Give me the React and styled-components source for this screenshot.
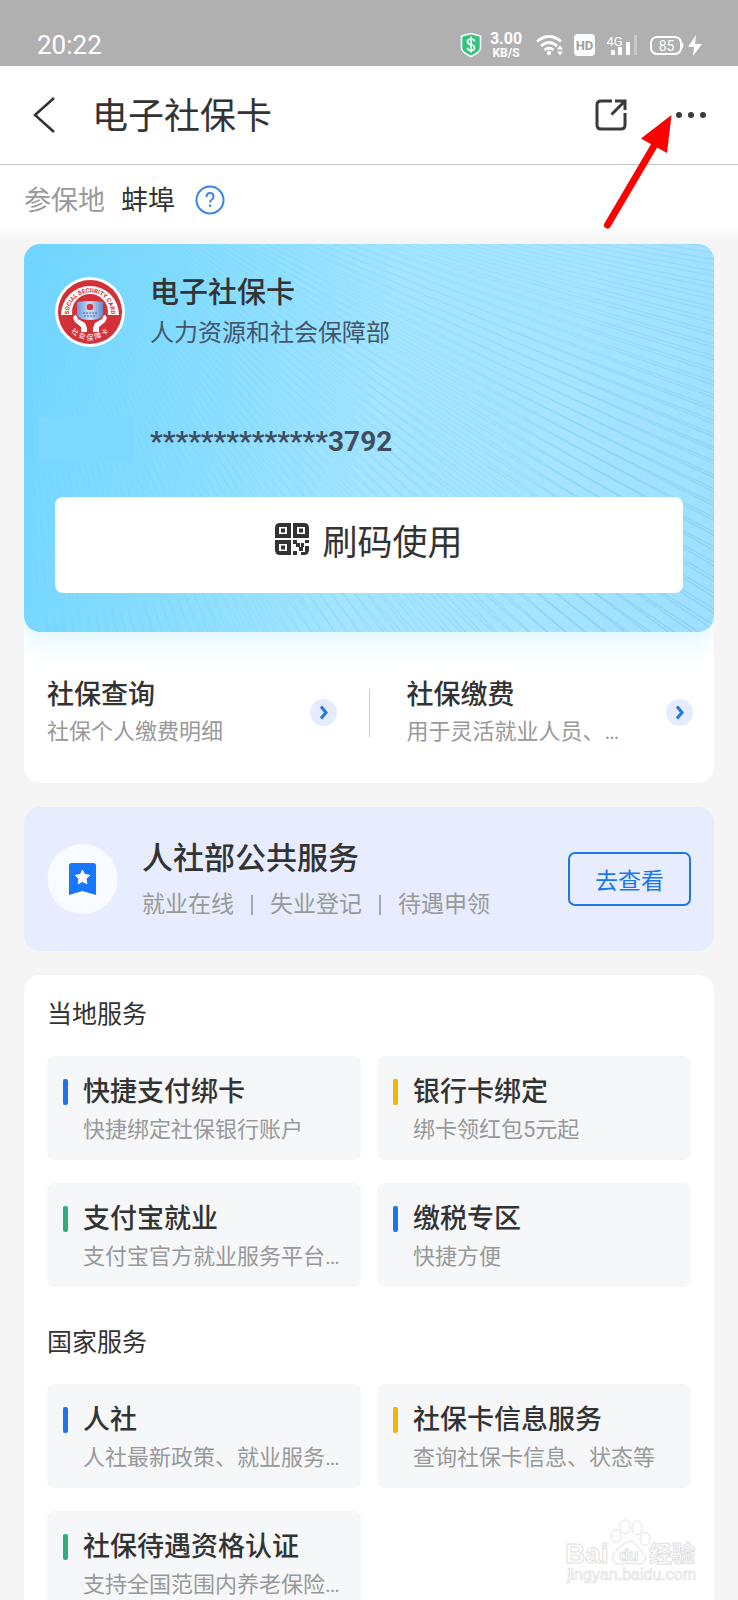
import React from "react";
import styled, { createGlobalStyle } from "styled-components";

const GlobalStyle = createGlobalStyle`
  * { box-sizing: border-box; }
  body {
    margin: 0;
    background: #f5f5f5;
    color: #333;
    font-family: Roboto, "Noto Sans CJK SC", sans-serif;
  }
  h1, h2, h3, p { margin: 0; font-weight: 400; }
  a { color: inherit; text-decoration: none; }
  button { font: inherit; color: inherit; border: 0; background: none; padding: 0; cursor: pointer; }
`;

const Screen = styled.div`
  position: relative;
  display: flex;
  flex-direction: column;
  height: 100vh;
  overflow: hidden;
`;

const StatusBar = styled.div`
  display: flex;
  align-items: center;
  flex: none;
  height: 66px;
  padding: 24px 36px 0 37px;
  background: #b0b0b0;
  color: #fff;
`;

const Clock = styled.time`
  flex: 1;
  font-size: 26px;
  line-height: 30px;
`;

const StatusIcons = styled.div`
  display: flex;
  align-items: center;
  gap: 8px;
`;

const NetSpeed = styled.div`
  display: flex;
  flex-direction: column;
  align-items: center;
  width: 32px;
  margin-right: 6px;
  font-weight: 700;
  font-size: 16px;
  line-height: 16px;
  small { font-size: 12px; line-height: 12px; }
`;

const Header = styled.header`
  display: flex;
  align-items: center;
  flex: none;
  height: 99px;
  padding: 0 31px 0 32px;
  background: #fff;
  border-bottom: 1px solid #c6c6c6;
`;

const IconButton = styled.button`
  display: flex;
  margin-left: ${(p) => p.$gap || 0}px;
`;

const PageTitle = styled.h1`
  flex: 1;
  margin-left: 35px;
  padding-top: 3px;
  font-size: 36px;
  line-height: 48px;
`;

const Content = styled.main`
  flex: 1;
  min-height: 0;
  overflow-y: auto;
  scrollbar-width: none;
`;

const Region = styled.div`
  display: flex;
  align-items: center;
  height: 79px;
  padding: 0 24px 9px;
  font-size: 27px;
  line-height: 40px;
  background: linear-gradient(#fff 60px, #f5f5f5 76px);
`;

const RegionText = styled.span`
  padding-top: 2px;
  margin-right: ${(p) => p.$gap}px;
  color: ${(p) => (p.$muted ? "#999" : "#333")};
`;

const Body = styled.div`
  display: flex;
  flex-direction: column;
  gap: 24px;
  padding: 0 24px;
`;

const Panel = styled.section`
  border-radius: 16px;
  background: #fff;
`;

const Card = styled.div`
  position: relative;
  overflow: hidden;
  padding: 28px 31px 39px;
  border-radius: 16px;
  background: linear-gradient(100deg, #70d5ff 0%, #84dcff 22%, #a4e4ff 50%, #a6e4ff 75%, #9ddfff 100%);
`;

const CardShadow = styled.div`
  border-radius: 16px;
  box-shadow: 0 12px 24px rgba(110, 220, 250, 0.2);
  clip-path: inset(0 0 -40px 0);
`;

const CardPattern = styled.svg`
  position: absolute;
  inset: 0;
  width: 100%;
  height: 100%;
`;

const CardHead = styled.div`
  position: relative;
  display: flex;
  align-items: center;
  gap: 25px;
`;

const CardTitle = styled.h2`
  font-size: 29px;
  font-weight: 500;
  line-height: 42px;
`;

const CardIssuer = styled.p`
  font-size: 24px;
  line-height: 38px;
  color: #44566a;
`;

const NumberRow = styled.div`
  position: relative;
  display: flex;
  align-items: center;
  gap: 16px;
  height: 44px;
  margin: 65px 0 36px -16px;
  font-size: 28px;
  font-weight: 700;
  line-height: 40px;
  color: #3f4d5e;
`;

const CardNumber = styled.span`
  padding-top: 6px;
`;

const NameMask = styled.span`
  width: 95px;
  height: 44px;
  background: #7cd8ff;
`;

const ScanButton = styled.button`
  position: relative;
  display: flex;
  align-items: center;
  justify-content: center;
  gap: 13px;
  width: 100%;
  height: 96px;
  padding-bottom: 12px;
  border-radius: 8px;
  background: #fff;
  font-size: 35px;
  line-height: 48px;
`;

const ScanLabel = styled.span`
  padding-top: 10px;
`;

const QuickLinks = styled.nav`
  display: grid;
  grid-template-columns: 1fr 1px 1fr;
  align-items: center;
  padding: 43px 0 33px;
`;

const QuickLink = styled.a`
  display: flex;
  align-items: center;
  justify-content: space-between;
  min-width: 0;
  padding: ${(p) => (p.$second ? "0 21px 0 37px" : "0 32px 0 23px")};
`;

const Divider = styled.span`
  height: 48px;
  background: #ccc;
`;

const LinkText = styled.div`
  padding-top: 1px;
`;

const ItemTitle = styled.h3`
  font-size: 27px;
  font-weight: 500;
  line-height: ${(p) => p.$line || 36}px;
  white-space: nowrap;
`;

const ItemNote = styled.p`
  overflow: hidden;
  font-size: 22px;
  line-height: ${(p) => p.$line || 40}px;
  color: #999;
  white-space: nowrap;
  text-overflow: ellipsis;
`;

const Banner = styled.section`
  display: flex;
  align-items: center;
  padding: 24px 23px;
  border-radius: 16px;
  background: #e7edff;
`;

const BannerText = styled.div`
  flex: 1;
  margin-left: 24px;
  padding-top: 4px;
`;

const BannerTitle = styled.h2`
  font-size: 31px;
  font-weight: 500;
  line-height: 48px;
`;

const BannerTopics = styled.p`
  display: flex;
  align-items: center;
  gap: 17px;
  font-size: 23px;
  line-height: 44px;
  color: #999;
  i { width: 2px; height: 20px; background: #a3a7b3; }
`;

const OutlineButton = styled.button`
  width: 123px;
  height: 54px;
  border: 2px solid #1c78e6;
  border-radius: 7px;
  color: #1c78e6;
  font-size: 23px;
`;

const ServicePanel = styled(Panel)`
  padding: 22px 23px 24px;
`;

const SectionTitle = styled.h2`
  margin: ${(p) => p.$top || 0}px 0 23px;
  font-size: 25px;
  line-height: 36px;
`;

const Grid = styled.div`
  display: grid;
  grid-template-columns: 1fr 1fr;
  gap: 23px 16px;
`;

const Tile = styled.a`
  display: grid;
  grid-template-columns: 5px minmax(0, 1fr);
  align-items: center;
  column-gap: 15px;
  padding: 18px 16px 10px;
  border-radius: 8px;
  background: #f5f7f9;
  ${ItemNote} { grid-column: 2; }
`;

const Accent = styled.span`
  height: 26px;
  border-radius: 2px;
  background: ${(p) => p.$color};
`;

const Pointer = styled.svg`
  position: absolute;
  top: 112px;
  right: 64px;
  pointer-events: none;
`;

const Watermark = styled.svg`
  position: absolute;
  right: 36px;
  bottom: 14px;
  pointer-events: none;
`;

const BLUE = "#1f76ea";
const YELLOW = "#f2b50f";
const GREEN = "#2fae80";

const localServices = [
  { title: "快捷支付绑卡", note: "快捷绑定社保银行账户", color: BLUE },
  { title: "银行卡绑定", note: "绑卡领红包5元起", color: YELLOW },
  { title: "支付宝就业", note: "支付宝官方就业服务平台…", color: GREEN },
  { title: "缴税专区", note: "快捷方便", color: BLUE },
];

const nationalServices = [
  { title: "人社", note: "人社最新政策、就业服务…", color: BLUE },
  { title: "社保卡信息服务", note: "查询社保卡信息、状态等", color: YELLOW },
  { title: "社保待遇资格认证", note: "支持全国范围内养老保险…", color: GREEN },
];

function StatusGlyphs() {
  return (
    <svg width="166" height="24" viewBox="536 33 166 24" fill="#fff">
      <g fill="none" stroke="#fff" strokeWidth="2.8">
        <path d="M537 41.5Q549 31.5 561 41.5" />
        <path d="M541 46Q549 39 557 46" />
        <path d="M544.5 50Q549 46.5 553.5 50" />
      </g>
      <circle cx="549" cy="53" r="2.2" />
      <path d="M557 49.5l3-4 3 4zM557 51.5l3 4 3-4z" />
      <rect x="574" y="34" width="21" height="22" rx="4" />
      <text x="584.5" y="50" fontSize="13" fontWeight="700" textAnchor="middle" fill="#a0a0a0">HD</text>
      <text x="606.5" y="46" fontSize="13">4G</text>
      <rect x="611" y="50" width="4" height="5" />
      <rect x="618" y="47" width="4" height="8" />
      <rect x="626" y="42" width="4" height="13" />
      <rect x="634" y="35" width="3" height="20" opacity=".3" />
      <rect x="651" y="37" width="30" height="17" rx="6" fill="none" stroke="#fff" strokeWidth="2" />
      <path d="M682 42q3 3.500 0 7z" />
      <text x="666.5" y="50.5" fontSize="14" textAnchor="middle">85</text>
      <path d="M696 35l-8 12h6l-1 9 9-12h-7z" />
    </svg>
  );
}

function Shield() {
  return (
    <svg width="22" height="26" viewBox="0 0 22 26">
      <path d="M11 1.5L20.500 4v12q0 4-9.500 8.500Q1.500 20 1.500 16V4z" fill="#35c47c" stroke="#fff" strokeWidth="1.5" />
      <path d="M14.5 9.500q0-2.500-3.500-2.500t-3.500 2.800q0 2.200 3.500 2.900t3.500 3q0 2.800-3.500 2.800t-3.500-2.700M11 4.500v16" fill="none" stroke="#fff" strokeWidth="1.6" />
    </svg>
  );
}

function Emblem() {
  return (
    <svg width="70" height="70" viewBox="-35 -35 70 70" role="img" aria-label="社会保障卡">
      <defs>
        <path id="emblem-top" d="M-20.5 6A21 21 0 1 1 20.5 6" />
        <path id="emblem-bottom" d="M-26 9A27.500 27.500 0 0 0 26 9" />
        <linearGradient id="emblem-card" x2="1">
          <stop stopColor="#6e97d4" />
          <stop offset=".5" stopColor="#cfe2fa" />
          <stop offset="1" stopColor="#6487c8" />
        </linearGradient>
      </defs>
      <circle r="35" fill="#fff" />
      <circle r="32" fill="#d2313a" />
      <path d="M-29 3A29 29 0 1 1 29 3H17A17 17 0 1 0 -17 3z" fill="#fff" />
      <circle r="18" fill="#d2313a" />
      <path d="M-14 3q-5 1-1 7l6 5v5h6v-4l-2-5-7-4zM14 3q5 1 1 7l-6 5v5H3v-4l2-5 7-4z" fill="#fff" />
      <path d="M-13-10q13-2 26 0V3q-2 5-13 5T-13 3z" fill="url(#emblem-card)" />
      <circle cy="-5" r="3.2" fill="#e03338" />
      <path d="M-7 1H7M-6 4H6" stroke="#4465b0" strokeWidth="1" strokeDasharray="2 1" />
      <text fontSize="6" fontWeight="700" fill="#c62e38">
        <textPath href="#emblem-top" startOffset="50%" textAnchor="middle">SOCIAL SECURITY CARD</textPath>
      </text>
      <text fontSize="7" fill="#fff">
        <textPath href="#emblem-bottom" startOffset="50%" textAnchor="middle">社 会 保 障 卡</textPath>
      </text>
    </svg>
  );
}

// Two overlapping fans of hairlines give the card its woven sheen.
function fan(cx, cy, count, offset) {
  return Array.from({ length: count }, (_, i) => {
    const a = ((i + offset) / count) * (Math.PI / 2) * 1.15 - 0.05;
    const x = cx + Math.cos(a) * 1100;
    const y = cy + Math.sin(a) * 1100;
    const mx = cx + Math.cos(a + 0.08) * 550;
    const my = cy + Math.sin(a + 0.08) * 550;
    return `M${cx} ${cy}Q${mx.toFixed(1)} ${my.toFixed(1)} ${x.toFixed(1)} ${y.toFixed(1)}`;
  }).join("");
}

function Pattern() {
  return (
    <CardPattern viewBox="0 0 690 388" preserveAspectRatio="none" aria-hidden="true">
      <defs>
        <linearGradient id="sheen" gradientUnits="userSpaceOnUse" x1="0" y1="0" x2="690" y2="388">
          <stop stopColor="#5bc8f5" stopOpacity=".04" />
          <stop offset=".5" stopColor="#6fd0fa" stopOpacity=".22" />
          <stop offset="1" stopColor="#70b8e8" stopOpacity=".4" />
        </linearGradient>
      </defs>
      <g fill="none" stroke="url(#sheen)" strokeWidth="1.3">
        <path d={fan(-60, -160, 120, 0)} />
        <path d={fan(10, -130, 110, 0.5)} />
      </g>
    </CardPattern>
  );
}

function QrIcon() {
  return (
    <svg width="34" height="32" viewBox="0 0 34 32" fill="#333">
      <path fillRule="evenodd" d="M5 0H16V15H0V5Q0 0 5 0zM4 4V11H12V4zM18 0H29Q34 0 34 5V15H18zM22 4V11H30V4zM0 17H16V32H5Q0 32 0 27zM4 21V28H12V21z" />
      <path d="M6 5.500H10V9.500H6zM24 5.500H28V9.500H24zM6 22.500H10V26.500H6zM18 17h4v3h3v4h3v4h-4v-4h-3v-3h-3zM30 17h4v3h-4zM26 20h3v4h-3zM30 23h4v4q0 5-5 5h-3v-3h4zM18 28h4v4h-4z" />
    </svg>
  );
}

function ArrowDot() {
  return (
    <svg width="27" height="27" viewBox="0 0 27 27">
      <circle cx="13.5" cy="13.5" r="13.5" fill="#e4ecfd" />
      <path d="M11 7.500l5 6-5 6" fill="none" stroke="#2277ec" strokeWidth="3" />
    </svg>
  );
}

function BookmarkBadge() {
  return (
    <svg width="71" height="70" viewBox="0 0 71 70">
      <circle cx="35.5" cy="35" r="35" fill="#f8fbff" />
      <path d="M24.5 19h22q2.500 0 2.500 2.500V51l-13.500-4L22 51V21.500q0-2.500 2.500-2.500z" fill="#1777ff" />
      <path d="M35.5 26l2.200 4.600 5 .7-3.700 3.500.9 5-4.400-2.400-4.400 2.400.9-5-3.700-3.500 5-.7z" fill="#fff" stroke="#fff" strokeLinejoin="round" />
    </svg>
  );
}

function Services({ items }) {
  return (
    <Grid>
      {items.map((item) => (
        <Tile href="#" key={item.title}>
          <Accent $color={item.color} />
          <ItemTitle>{item.title}</ItemTitle>
          <ItemNote>{item.note}</ItemNote>
        </Tile>
      ))}
    </Grid>
  );
}

export default function App() {
  return (
    <Screen>
      <GlobalStyle />
      <StatusBar>
        <Clock>20:22</Clock>
        <StatusIcons>
          <Shield />
          <NetSpeed>
            <span>3.00</span>
            <small>KB/S</small>
          </NetSpeed>
          <StatusGlyphs />
        </StatusIcons>
      </StatusBar>

      <Header>
        <IconButton aria-label="返回">
          <svg width="25" height="36" viewBox="0 0 25 36" fill="none" stroke="#333" strokeWidth="2.5">
            <path d="M22 1L3 18l19 17" />
          </svg>
        </IconButton>
        <PageTitle>电子社保卡</PageTitle>
        <IconButton aria-label="分享">
          <svg width="32" height="32" viewBox="0 0 32 32" fill="none" stroke="#3a3a3a" strokeWidth="3">
            <path d="M17 2H6Q2 2 2 6V26Q2 30 6 30H26Q30 30 30 26V14M20 2H30V11M30 2L16.500 15.500" />
          </svg>
        </IconButton>
        <IconButton aria-label="更多" $gap={48}>
          <svg width="32" height="10" viewBox="0 0 32 10" fill="#3a3a3a">
            <circle cx="4" cy="5" r="3" />
            <circle cx="16" cy="5" r="3" />
            <circle cx="28" cy="5" r="3" />
          </svg>
        </IconButton>
      </Header>

      <Content>
        <Region>
          <RegionText $muted $gap={16}>参保地</RegionText>
          <RegionText $gap={20}>蚌埠</RegionText>
          <IconButton aria-label="帮助">
            <svg width="30" height="30" viewBox="0 0 30 30" fill="none" stroke="#3c86e8" strokeWidth="2">
              <circle cx="15" cy="15" r="13.5" />
              <path d="M11.500 12q0-4 3.500-4t3.500 3.500q0 2-1.700 3t-1.800 3M15 19.500v2.500" />
            </svg>
          </IconButton>
        </Region>

        <Body>
          <Panel>
            <CardShadow>
              <Card>
                <Pattern />
                <CardHead>
                  <Emblem />
                  <div>
                    <CardTitle>电子社保卡</CardTitle>
                    <CardIssuer>人力资源和社会保障部</CardIssuer>
                  </div>
                </CardHead>
                <NumberRow>
                  <NameMask />
                  <CardNumber>**************3792</CardNumber>
                </NumberRow>
                <ScanButton>
                  <QrIcon />
                  <ScanLabel>刷码使用</ScanLabel>
                </ScanButton>
              </Card>
            </CardShadow>
            <QuickLinks>
              <QuickLink href="#">
                <LinkText>
                  <ItemTitle $line={38}>社保查询</ItemTitle>
                  <ItemNote $line={36}>社保个人缴费明细</ItemNote>
                </LinkText>
                <ArrowDot />
              </QuickLink>
              <Divider />
              <QuickLink href="#" $second>
                <LinkText>
                  <ItemTitle $line={38}>社保缴费</ItemTitle>
                  <ItemNote $line={36}>用于灵活就业人员、…</ItemNote>
                </LinkText>
                <ArrowDot />
              </QuickLink>
            </QuickLinks>
          </Panel>

          <Banner>
            <BookmarkBadge />
            <BannerText>
              <BannerTitle>人社部公共服务</BannerTitle>
              <BannerTopics>
                就业在线<i />失业登记<i />待遇申领
              </BannerTopics>
            </BannerText>
            <OutlineButton>去查看</OutlineButton>
          </Banner>

          <ServicePanel>
            <SectionTitle>当地服务</SectionTitle>
            <Services items={localServices} />
            <SectionTitle $top={38}>国家服务</SectionTitle>
            <Services items={nationalServices} />
          </ServicePanel>
        </Body>
      </Content>

      <Pointer width="70" height="120" viewBox="604 112 70 120" aria-hidden="true">
        <path d="M607.5 225L654 146" stroke="#fe0000" strokeWidth="7" strokeLinecap="round" />
        <path d="M671.5 115L641 138.500L667 153z" fill="#fe0000" />
      </Pointer>

      <Watermark width="138" height="70" viewBox="0 0 138 70" fill="#fff" stroke="#e0e0e0" aria-hidden="true">
        <text x="1" y="47" fontSize="28" fontWeight="700" fontFamily="Liberation Sans">Bai</text>
        <ellipse cx="52" cy="20" rx="5" ry="6.5" />
        <ellipse cx="61" cy="11" rx="5" ry="7" />
        <ellipse cx="73" cy="12" rx="5" ry="7" />
        <ellipse cx="81" cy="23" rx="5" ry="6.5" />
        <path d="M65 25q5 0 9 6t7 8q3 10-9 9-7-2-14 0-12 1-9-9 3-4 7-8t9-6z" />
        <text x="55" y="45" fontSize="16" fontWeight="700" fontFamily="Liberation Sans">du</text>
        <text x="85" y="46" fontSize="23" fontWeight="700" fontFamily="Noto Sans CJK SC">经验</text>
        <text x="3" y="64" fontSize="16" fontFamily="Liberation Sans" strokeWidth=".7">jingyan.baidu.com</text>
      </Watermark>
    </Screen>
  );
}
